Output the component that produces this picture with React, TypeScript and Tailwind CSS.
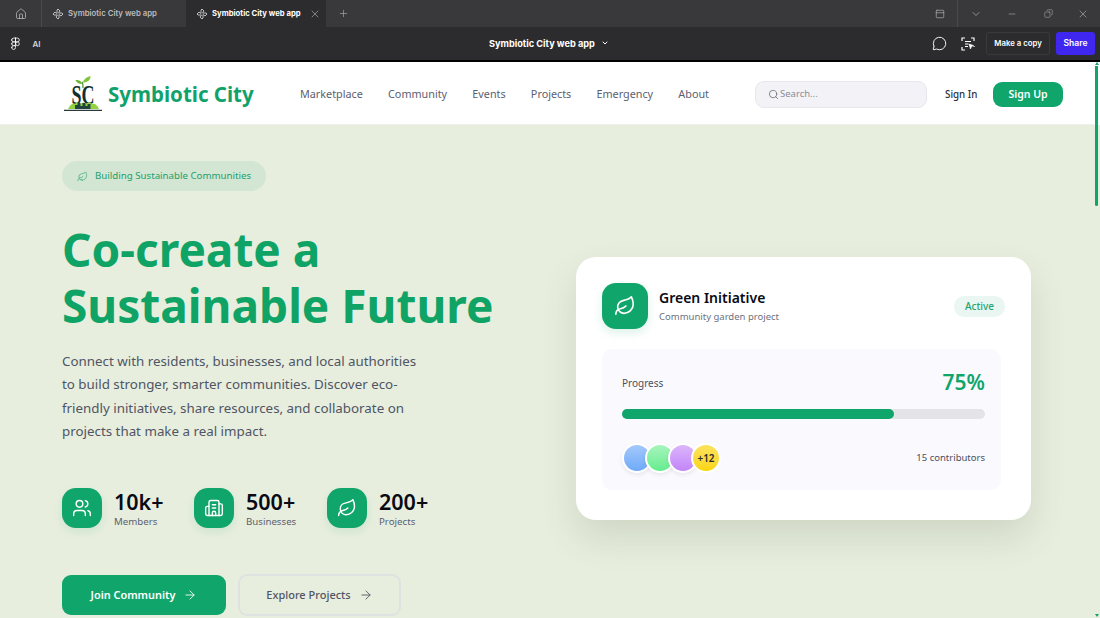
import { ArrowRight, Building2, ChevronDown, Copy, Figma, Home, Leaf, MessageCircle, Minus, PanelTop, Plus, Search, Users, X } from "lucide-react";

const navLinks = ["Marketplace", "Community", "Events", "Projects", "Emergency", "About"];

const stats = [
  { value: "10k+", label: "Members", icon: Users, width: "w-[132px]" },
  { value: "500+", label: "Businesses", icon: Building2, width: "w-[133px]" },
  { value: "200+", label: "Projects", icon: Leaf, width: "w-[110px]" },
];

const avatars = [
  "from-[#a4c8fb] to-[#6eaaf8]",
  "from-[#a6f5bd] to-[#63ec8e]",
  "from-[#dcb5fb] to-[#c285f9]",
];

function MakeIcon() {
  return (
    <svg width="12" height="12" viewBox="0 0 12 12" fill="none" stroke="currentColor" strokeWidth="1" strokeLinejoin="round">
      <path d="M6 1 8 3 6.500 5H10l1 1-2 2-2-1.500V10l-1 1-2-2 1.500-2H2L1 6l2-2 2 1.500V2Z" />
    </svg>
  );
}

function ScanIcon() {
  return (
    <svg width="14" height="14" viewBox="0 0 14 14" fill="none" stroke="currentColor" strokeWidth="1.200">
      <path d="M1 4V1h3M10 1h3v3M1 10v3h3M13 9v1M4 4.500h6M4 7h3.500M4 9.500h3" />
      <path d="M8 7l4.500 1.500-2 1-1 2.500Z" fill="currentColor" strokeWidth="0.600" />
    </svg>
  );
}

function Logo() {
  return (
    <svg width="40" height="36" viewBox="0 0 40 36" className="shrink-0 overflow-visible">
      <path d="M20 12c0-3 0-5-1-6" stroke="#4d8f28" strokeWidth="1.200" fill="none" />
      <path d="M19 8c-3 0-5.500-1.500-6.500-4 3.200-.5 6 1 6.500 4Z" fill="#69b32e" />
      <path d="M20 6.500c.5-3 3.500-5.500 7.500-6.500.3 3.800-3 6.500-7.500 6.500Z" fill="#7fc537" />
      <text x="20" y="28" textAnchor="middle" textLength="23" lengthAdjust="spacingAndGlyphs" fontFamily="'Liberation Serif', serif" fontWeight="700" fontSize="27" fill="#12302e">
        SC
      </text>
      <path d="M5 33c2-4 4-6 7-5 2-2 3-1 5 0 2-2 4-2 6 0 2-2 4-2 6 0 3-1 5 1 7 5Z" fill="#93d43e" />
      <path d="M12 33v-4h2.500v-2h3v3h2v-3h3v3h2v-2h3v5Z" fill="#21443f" />
      <path d="M1 34.400h38" stroke="#2a3a3a" strokeWidth="1.100" />
    </svg>
  );
}

function TopChrome() {
  return (
    <div className="font-['Inter',sans-serif]">
      <div className="flex h-[27px] items-center bg-[#39383b] text-[#bdbcbe]">
        <div className="flex h-full w-[42px] items-center justify-center border-r border-[#4a494c]">
          <Home size={12} strokeWidth={1.500} />
        </div>
        <div className="flex h-full w-[144px] items-center gap-[4px] pl-[10px] text-[7.800px] font-semibold whitespace-nowrap">
          <MakeIcon />
          Symbiotic City web app
        </div>
        <div className="flex h-full w-[140px] items-center bg-[#2c2b2e] pl-[10px] text-[7.700px] font-bold whitespace-nowrap text-white">
          <span className="text-[#bdbcbe]">
            <MakeIcon />
          </span>
          <span className="ml-[4px]">Symbiotic City web app</span>
          <X size={12} strokeWidth={1.200} className="ml-[8px] shrink-0 text-[#bdbcbe]" />
        </div>
        <div className="flex h-full w-[34px] items-center justify-center">
          <Plus size={11} strokeWidth={1.200} />
        </div>
        <div className="ml-auto flex h-full items-center">
          <div className="flex h-full w-[36px] items-center justify-center border-r border-[#4a494c]">
            <PanelTop size={10} strokeWidth={1.500} />
          </div>
          <div className="flex w-[36px] justify-center">
            <ChevronDown size={12} strokeWidth={1.300} />
          </div>
          <div className="flex w-[36px] justify-center">
            <Minus size={10} strokeWidth={1.300} />
          </div>
          <div className="flex w-[36px] justify-center">
            <Copy size={9} strokeWidth={1.300} className="-scale-x-100" />
          </div>
          <div className="flex w-[34px] justify-center">
            <X size={12} strokeWidth={1.200} />
          </div>
        </div>
      </div>
      <div className="relative flex h-[35px] items-center border-b-2 border-black bg-[#2c2b2e] text-white">
        <Figma size={13} strokeWidth={1.500} className="ml-[9px]" />
        <span className="ml-[6px] flex h-[17px] w-[17px] items-center justify-center text-[8px] font-semibold text-[#d8d8d8]">AI</span>
        <div className="absolute left-[489px] flex items-center gap-[6px] text-[9.200px] font-bold whitespace-nowrap">
          Symbiotic City web app
          <ChevronDown size={8} strokeWidth={3} />
        </div>
        <div className="ml-auto flex items-center pr-[5px]">
          <MessageCircle size={15} strokeWidth={1.500} />
          <span className="ml-[14px]">
            <ScanIcon />
          </span>
          <div className="ml-[11px] flex h-[23px] w-[64px] items-center justify-center rounded-[3px] border border-[#3a393c] text-[7.800px] font-semibold whitespace-nowrap">
            Make a copy
          </div>
          <div className="ml-[6px] flex h-[23px] w-[39px] items-center justify-center rounded-[3px] bg-[#3f27f0] text-[8.500px] font-semibold">
            Share
          </div>
        </div>
      </div>
    </div>
  );
}

function Nav() {
  return (
    <header className="flex h-[63px] shrink-0 items-center border-b border-[#eef0ea] bg-white pt-[2px] pl-[63px]">
      <Logo />
      <span className="ml-[5px] w-[146px] shrink-0 text-[20.500px] font-bold whitespace-nowrap text-[#10a26a]">Symbiotic City</span>
      <nav className="ml-[46px] flex w-[409px] shrink-0 justify-between pt-[1px] text-[10.800px] whitespace-nowrap text-[#5b6070]">
        {navLinks.map((link) => (
          <a key={link}>{link}</a>
        ))}
      </nav>
      <div className="ml-[46px] flex h-[27px] w-[172px] shrink-0 items-center gap-[1px] rounded-[9px] border border-[#e8e6ee] bg-[#f3f2f6] pl-[12px] text-[9.500px] text-[#8c8d96]">
        <Search size={11} strokeWidth={1.500} className="text-[#555a66]" />
        Search...
      </div>
      <span className="ml-[18px] w-[31px] shrink-0 pt-[2px] text-[9.800px] font-medium whitespace-nowrap text-[#2b3040]">Sign In</span>
      <button className="ml-[17px] h-[25px] w-[70px] shrink-0 rounded-[9px] bg-[#10a56b] pt-[2px] text-[10.500px] font-semibold text-white">Sign Up</button>
    </header>
  );
}

function Stat({ value, label, icon: Icon, width }: (typeof stats)[number]) {
  return (
    <div className={`flex h-[40px] items-center gap-[12px] ${width}`}>
      <div className="flex h-[40px] w-[40px] items-center justify-center rounded-[14px] bg-[#10a56b] text-white shadow-[0_4px_10px_rgba(16,165,107,0.12)]">
        <Icon size={20} strokeWidth={1.700} />
      </div>
      <div className="pt-[2px]">
        <div className="text-[21.500px] leading-[26px] font-semibold text-[#090a14]">{value}</div>
        <div className="text-[9.700px] leading-[14px] text-[#5b6070]">{label}</div>
      </div>
    </div>
  );
}

function GreenCard() {
  return (
    <div className="mt-[132px] mr-[63px] ml-auto h-[263px] w-[455px] rounded-[20px] bg-white px-[26px] pt-[26px] shadow-[0_18px_36px_rgba(60,80,50,0.14)]">
      <div className="flex items-center">
        <div className="flex h-[46px] w-[46px] items-center justify-center rounded-[14px] bg-[#10a56b] text-white shadow-[0_4px_10px_rgba(16,165,107,0.15)]">
          <Leaf size={22} strokeWidth={1.800} />
        </div>
        <div className="ml-[11px]">
          <div className="text-[14px] leading-[20px] font-semibold text-[#090a14]">Green Initiative</div>
          <div className="mt-[1px] text-[9.500px] leading-[16px] text-[#6d7180]">Community garden project</div>
        </div>
        <span className="ml-auto rounded-full bg-[#e9f6f1] px-[11px] py-[3px] text-[10px] font-medium text-[#1fa573]">Active</span>
      </div>
      <div className="mt-[20px] h-[141px] w-[399px] rounded-[10px] bg-[#faf9fd] pt-[20px] pr-[16px] pl-[20px]">
        <div className="flex h-[28px] items-center justify-between">
          <span className="text-[10px] text-[#4b5060]">Progress</span>
          <span className="text-[21px] font-semibold text-[#10a56b]">75%</span>
        </div>
        <div className="mt-[12px] h-[10px] rounded-full bg-[#e4e4e8]">
          <div className="h-full w-3/4 rounded-full bg-[#10a56b]" />
        </div>
        <div className="mt-[24px] flex items-center">
          {avatars.map((colors) => (
            <div key={colors} className={`-mr-[7px] h-[30px] w-[30px] rounded-full border-2 border-white bg-gradient-to-b shadow-[0_2px_4px_rgba(0,0,0,0.08)] ${colors}`} />
          ))}
          <div className="flex h-[30px] w-[30px] items-center justify-center rounded-full border-2 border-white bg-gradient-to-b from-[#fbe25a] to-[#fbd605] text-[10px] font-semibold text-[#2a2a30]">
            +12
          </div>
          <span className="ml-auto text-[9.500px] text-[#4b5060]">15 contributors</span>
        </div>
      </div>
    </div>
  );
}

function Hero() {
  return (
    <section className="flex min-h-0 flex-1 overflow-hidden bg-[#e8eede] pl-[62px]">
      <div className="w-[440px] shrink-0 pt-[36px]">
        <div className="flex h-[30px] w-[204px] items-center gap-[7px] rounded-full bg-[#d2e6d3] pl-[15px] text-[9.700px] whitespace-nowrap text-[#1d9e6c]">
          <Leaf size={11} strokeWidth={1.300} />
          <span>Building Sustainable Communities</span>
        </div>
        <h1 className="mt-[30px] text-[46px] leading-[56px] font-bold whitespace-nowrap text-[#0fa366]">
          Co-create a
          <br />
          Sustainable Future
        </h1>
        <p className="mt-[17px] w-[362px] text-[13.350px] leading-[23.400px] text-[#4f5565]">
          Connect with residents, businesses, and local authorities to build stronger, smarter communities. Discover eco-friendly initiatives, share resources, and collaborate on projects that make a real impact.
        </p>
        <div className="mt-[44px] flex">
          {stats.map((stat) => (
            <Stat key={stat.label} {...stat} />
          ))}
        </div>
        <div className="mt-[47px] flex gap-[12px]">
          <button className="flex h-[40px] w-[164px] items-center justify-center gap-[8px] rounded-[9px] bg-[#10a56b] pt-[1px] text-[10.900px] font-semibold whitespace-nowrap text-white">
            Join Community
            <ArrowRight size={14} strokeWidth={1.500} />
          </button>
          <button className="-mt-[1px] flex h-[42px] w-[163px] items-center justify-center gap-[8px] rounded-[9px] border-2 border-[#dfe2e0] pt-[1px] text-[11px] font-medium whitespace-nowrap text-[#505565]">
            Explore Projects
            <ArrowRight size={14} strokeWidth={1.500} />
          </button>
        </div>
      </div>
      <GreenCard />
    </section>
  );
}

function Scrollbar() {
  return (
    <div className="relative flex w-[6px] shrink-0 flex-col">
      <div className="h-[63px] bg-white" />
      <div className="flex-1 bg-[#e8eede]" />
      <div className="absolute top-0 left-[1px] h-0 w-0 border-x-[2px] border-b-[3px] border-x-transparent border-b-[#10a56b]" />
      <div className="absolute top-[4px] left-[1px] h-[140px] w-[3px] rounded-b-sm bg-[#10a56b]" />
      <div className="absolute bottom-[1px] left-[1px] h-0 w-0 border-x-[2px] border-t-[3px] border-x-transparent border-t-[#10a56b]" />
    </div>
  );
}

export default function App() {
  return (
    <div className="flex h-[618px] w-[1100px] flex-col overflow-hidden font-['Noto_Sans',sans-serif]">
      <TopChrome />
      <div className="flex min-h-0 flex-1">
        <div className="flex min-w-0 flex-1 flex-col">
          <Nav />
          <Hero />
        </div>
        <Scrollbar />
      </div>
    </div>
  );
}
